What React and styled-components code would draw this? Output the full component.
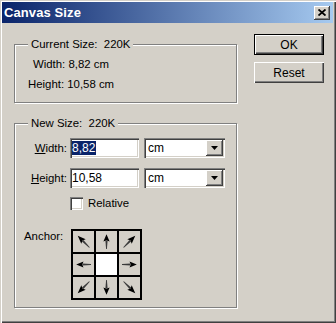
import React from 'react';
import styled, { createGlobalStyle } from 'styled-components';

const Global = createGlobalStyle`
  html, body { margin: 0; padding: 0; background: #D4D0C8; }
  body { font-family: "Liberation Sans", Arial, sans-serif; font-size: 11.4px; color: #000; }
  * { box-sizing: border-box; }
`;

const Window = styled.div`
  width: 336px;
  height: 323px;
  padding: 2px 3px 3px 2px;
  background: #D4D0C8;
  box-shadow: inset 1px 1px 0 #D4D0C8, inset 2px 2px 0 #fff,
    inset -1px -1px 0 #404040, inset -2px -2px 0 #808080;
  display: flex;
  flex-direction: column;
`;

const TitleBar = styled.div`
  height: 21px;
  display: flex;
  align-items: center;
  justify-content: space-between;
  padding: 0 3px 0 2px;
  background: linear-gradient(to right, #0A246A, #A6CAF0);
`;

const Title = styled.span`
  color: #fff;
  font-weight: bold;
  font-size: 13px;
  letter-spacing: 0.1px;
`;

const CloseButton = styled.div`
  width: 16px;
  height: 14px;
  background: #D4D0C8;
  box-shadow: inset -1px -1px 0 #404040, inset 1px 1px 0 #fff,
    inset -2px -2px 0 #808080;
  display: flex;
  align-items: center;
  justify-content: center;
  padding: 0 1px 1px 0;
`;

const Body = styled.div`
  flex: 1;
  display: flex;
  align-items: flex-start;
`;

const LeftColumn = styled.div`
  padding-left: 12px;
  display: flex;
  flex-direction: column;
`;

const Group = styled.fieldset`
  margin: ${(p) => p.$top}px 0 0 0;
  width: 223px;
  padding: ${(p) => p.$pad};
  border: 1px solid #808080;
  box-shadow: inset 1px 1px 0 #fff, 1px 1px 0 #fff;
  min-width: 0;
`;

const Legend = styled.legend`
  margin-left: 13px;
  padding: 0 3px;
  line-height: 13px;
  background: #D4D0C8;
  white-space: pre;
`;

const InfoRow = styled.div`
  padding-left: ${(p) => p.$indent}px;
  line-height: 13px;
  margin-top: ${(p) => p.$gap}px;
  white-space: pre;
`;

const FormGrid = styled.div`
  display: grid;
  grid-template-columns: 52px 69px 83px;
  grid-template-rows: 20px 20px 13px;
  column-gap: 3px;
  row-gap: 10px;
  align-items: center;
`;

const Label = styled.label`
  text-align: right;
  line-height: 13px;
`;

const Sunken = styled.div`
  height: ${(p) => p.$h || 20}px;
  background: #fff;
  box-shadow: inset 1px 1px 0 #808080, inset 2px 2px 0 #404040,
    inset -1px -1px 0 #fff, inset -2px -2px 0 #D4D0C8;
  display: flex;
  align-items: center;
`;

const TextField = styled(Sunken)`
  padding-left: 2px;
  font-size: 12px;
`;

const Selected = styled.span`
  background: #0A246A;
  color: #fff;
  line-height: 14px;
  padding-right: 1px;
`;

const SelectBox = styled(Sunken)`
  margin-left: 2px;
  padding: 2px 2px 2px 4px;
  justify-content: space-between;
  font-size: 12px;
`;

const DropButton = styled.div`
  width: 17px;
  height: 16px;
  background: #D4D0C8;
  box-shadow: inset -1px -1px 0 #404040, inset 1px 1px 0 #fff,
    inset -2px -2px 0 #808080;
  display: flex;
  align-items: center;
  justify-content: center;
  padding: 0 1px 1px 0;
`;

const CheckRow = styled.div`
  grid-column: 2 / span 2;
  display: flex;
  align-items: center;
  gap: 5px;
  margin-top: -2px;
  line-height: 13px;
`;

const CheckBox = styled(Sunken)`
  width: 13px;
  height: 13px;
`;

const AnchorRow = styled.div`
  display: flex;
  align-items: flex-start;
  padding-left: 9px;
  margin-top: 18px;
`;

const AnchorLabel = styled.span`
  width: 47px;
  line-height: 13px;
  margin-top: 1px;
`;

const AnchorGrid = styled.div`
  display: grid;
  grid-template-columns: repeat(3, 21px);
  grid-template-rows: repeat(3, 21px);
  gap: 2px;
  padding: 2px;
  background: #000;
`;

const Cell = styled.div`
  background: ${(p) => (p.$center ? '#fff' : '#D4D0C8')};
  display: flex;
  align-items: center;
  justify-content: center;
`;

const RightColumn = styled.div`
  margin-left: 17px;
  padding-top: 11px;
  display: flex;
  flex-direction: column;
  gap: 7px;
`;

const Button = styled.div`
  width: 70px;
  height: 21px;
  display: flex;
  align-items: center;
  justify-content: center;
  font-size: 12px;
  background: #D4D0C8;
  ${(p) =>
    p.$default
      ? `border: 1px solid #000;
         box-shadow: inset 1px 1px 0 #fff, inset -1px -1px 0 #404040, inset -2px -2px 0 #808080;`
      : `box-shadow: inset 1px 1px 0 #fff, inset -1px -1px 0 #404040, inset -2px -2px 0 #808080;`}
`;

const Arrow = ({ angle }) => {
  const diag = angle % 90 !== 0;
  const s = diag ? 1.12 : 1;
  return (
    <svg width="21" height="21" viewBox="0 0 21 21">
      <g transform={`rotate(${angle} 10.5 10.5) translate(10.5 10.5) scale(${s} 1) translate(-10.5 -10.5)`}>
        <polygon points="3,10.1 11.5,9.4 11.5,11.6 3,10.9" fill="#3a3a3a" />
        <polygon points="17.8,10.5 10.5,7.4 11.8,10.5 10.5,13.6" fill="#000" />
      </g>
    </svg>
  );
};

const CloseIcon = () => (
  <svg width="8" height="7" viewBox="0 0 8 7">
    <path d="M0.5 0.5 L7.5 6.5 M7.5 0.5 L0.5 6.5" stroke="#000" strokeWidth="1.8" />
  </svg>
);

const DownIcon = () => (
  <svg width="7" height="4" viewBox="0 0 7 4">
    <polygon points="0,0 7,0 3.5,4" fill="#000" />
  </svg>
);

const anchors = [-135, -90, -45, 180, null, 0, 135, 90, 45];

export default function App() {
  return (
    <>
      <Global />
      <Window>
        <TitleBar>
          <Title>Canvas Size</Title>
          <CloseButton>
            <CloseIcon />
          </CloseButton>
        </TitleBar>
        <Body>
          <LeftColumn>
            <Group $top={15} $pad="0 0 11px 0">
              <Legend>Current Size:  220K</Legend>
              <InfoRow $indent={18} $gap={7}>Width: 8,82 cm</InfoRow>
              <InfoRow $indent={13} $gap={7}>Height: 10,58 cm</InfoRow>
            </Group>
            <Group $top={14} $pad="8px 0 7px 0">
              <Legend>New Size:  220K</Legend>
              <FormGrid>
                <Label>
                  <u>W</u>idth:
                </Label>
                <TextField>
                  <Selected>8,82</Selected>
                </TextField>
                <SelectBox>
                  <span>cm</span>
                  <DropButton>
                    <DownIcon />
                  </DropButton>
                </SelectBox>
                <Label>
                  <u>H</u>eight:
                </Label>
                <TextField>10,58</TextField>
                <SelectBox>
                  <span>cm</span>
                  <DropButton>
                    <DownIcon />
                  </DropButton>
                </SelectBox>
                <CheckRow>
                  <CheckBox $h={13} />
                  <span>Relative</span>
                </CheckRow>
              </FormGrid>
              <AnchorRow>
                <AnchorLabel>Anchor:</AnchorLabel>
                <AnchorGrid>
                  {anchors.map((a, i) => (
                    <Cell key={i} $center={a === null}>
                      {a !== null && <Arrow angle={a} />}
                    </Cell>
                  ))}
                </AnchorGrid>
              </AnchorRow>
            </Group>
          </LeftColumn>
          <RightColumn>
            <Button $default>OK</Button>
            <Button>Reset</Button>
          </RightColumn>
        </Body>
      </Window>
    </>
  );
}
